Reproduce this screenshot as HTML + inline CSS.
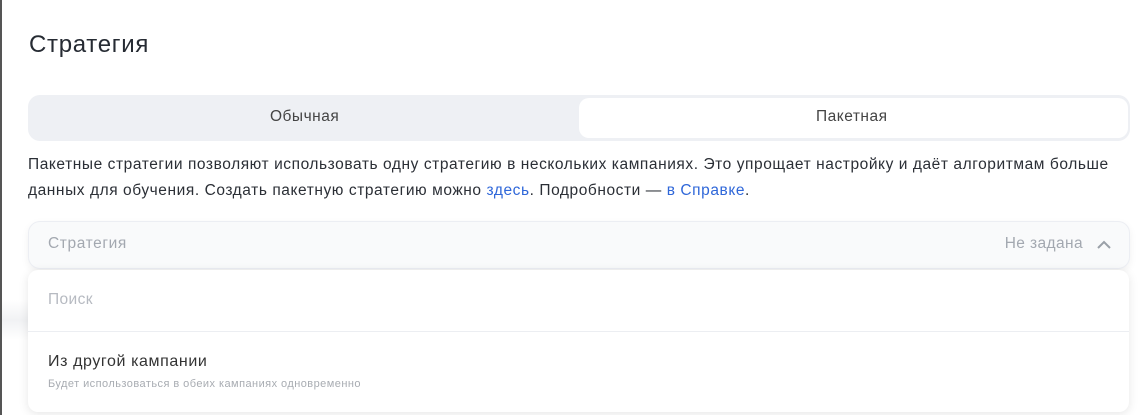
<!DOCTYPE html>
<html><head><meta charset="utf-8"><style>
*{margin:0;padding:0;box-sizing:border-box}
body{width:1140px;height:415px;overflow:hidden;background:#fff;font-family:"Liberation Sans","DejaVu Sans",sans-serif;position:relative}
.lb{position:absolute;left:0;top:0;width:2px;height:415px;background:#555}
.tt{position:absolute;left:29px;top:31px;font-size:24px;letter-spacing:.7px;color:#262b33}
.seg{position:absolute;left:28px;top:95px;width:1102px;height:46px;background:#eef0f4;border-radius:12px}
.seg .a{position:absolute;left:551px;top:3px;width:549px;height:40px;background:#fff;border-radius:10px}
.seg span{position:absolute;top:13px;font-size:15.5px;letter-spacing:.5px;color:#444}
.p{position:absolute;left:28px;top:152px;font-size:15.5px;letter-spacing:.57px;line-height:26px;color:#2b2f36;width:1110px}
.p a{color:#2f67d9;text-decoration:none}
.f{position:absolute;left:28px;top:221px;width:1102px;height:48px;background:#f9fafb;border:1px solid #eceef3;border-radius:12px;box-shadow:0 3px 8px rgba(0,0,0,.06)}
.f .l{position:absolute;left:19px;top:13px;font-size:15.5px;letter-spacing:.6px;color:#a3a8b0}
.f .r{position:absolute;right:46px;top:13px;font-size:15.5px;letter-spacing:.4px;color:#a3a8b0}
.d{position:absolute;left:28px;top:270px;width:1101px;height:142px;background:#fff;border-radius:10px;box-shadow:0 2px 10px rgba(0,0,0,.10)}
.d .s{position:absolute;left:20px;top:21px;font-size:15.5px;letter-spacing:.4px;color:#b6bac1}
.d .hr{position:absolute;left:0;right:0;top:61px;height:1px;background:#eceef2}
.d .i{position:absolute;left:20px;top:83px;font-size:16px;letter-spacing:.6px;color:#333}
.d .sub{position:absolute;left:20px;top:108px;font-size:11px;letter-spacing:.45px;color:#a8acb2}
.sh{position:absolute;left:2px;top:300px;width:26px;height:40px;background:linear-gradient(#fff,#f1f2f4,#fff)}
</style></head><body>
<div class="lb"></div>
<div class="tt">Стратегия</div>
<div class="seg"><div class="a"></div><span style="left:242px">Обычная</span><span style="left:788px">Пакетная</span></div>
<div class="p">Пакетные стратегии позволяют использовать одну стратегию в нескольких кампаниях. Это упрощает настройку и даёт алгоритмам больше данных для обучения. Создать пакетную стратегию можно <a>здесь</a>. Подробности — <a>в Справке</a>.</div>
<div class="sh"></div>
<div class="f"><span class="l">Стратегия</span><span class="r">Не задана</span>
<svg style="position:absolute;right:17px;top:17px" width="16" height="12" viewBox="0 0 16 12"><path d="M2 9 L8 3 L14 9" fill="none" stroke="#9aa0a8" stroke-width="2"/></svg></div>
<div class="d"><span class="s">Поиск</span><div class="hr"></div><span class="i">Из другой кампании</span><span class="sub">Будет использоваться в обеих кампаниях одновременно</span></div>
</body></html>
